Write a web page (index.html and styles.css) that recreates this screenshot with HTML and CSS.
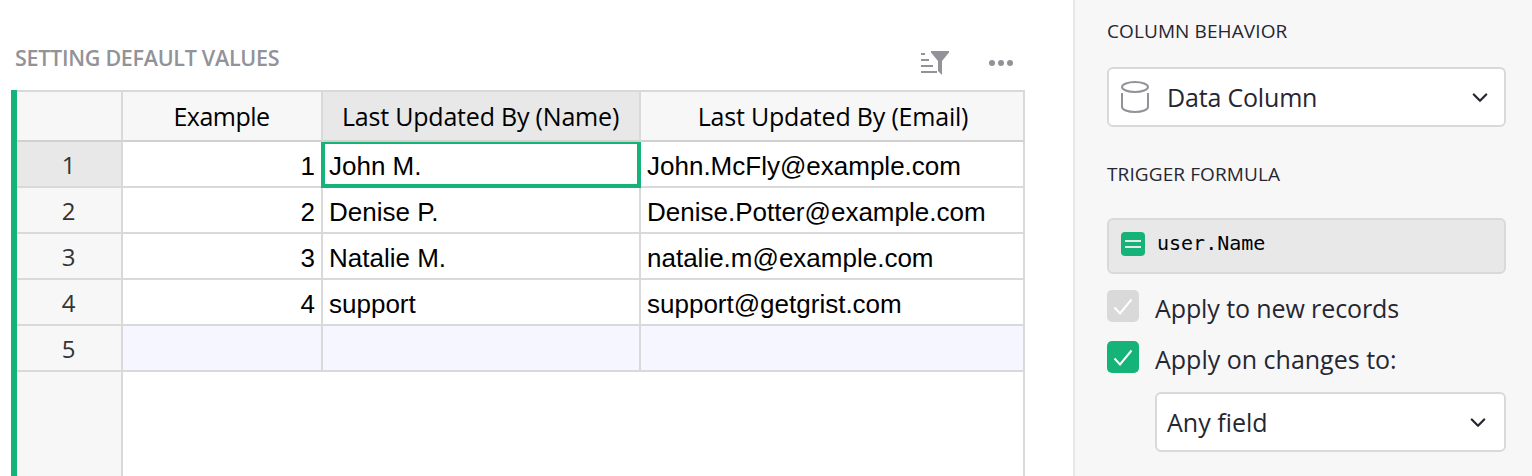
FILE: index.html
```html
<!DOCTYPE html>
<html lang="en">
<head>
<meta charset="utf-8">
<title>Setting Default Values</title>
<link rel="stylesheet" href="styles.css">
</head>
<body>
<div class="app">
  <main class="section">
    <header class="section-head">
      <h1 class="section-title">SETTING DEFAULT VALUES</h1>
      <div class="section-tools">
        <svg class="icon-filter" width="28" height="24" viewBox="0 0 28 24" fill="#929299"><path d="M0 2h4v2H0zM0 8h8v2H0zM0 14h12v2H0zM0 20h16v2H0zM10 0h18v1.500l-7 8.500v14l-4-4v-10l-7-8.500z"/></svg>
        <svg class="icon-dots" width="24" height="6" viewBox="0 0 24 6" fill="#929299"><circle cx="3" cy="3" r="3"/><circle cx="12" cy="3" r="3"/><circle cx="21" cy="3" r="3"/></svg>
      </div>
    </header>
    <div class="grid">
      <div class="row head">
        <div class="num"></div>
        <div class="cell"><span class="tight">Example</span></div>
        <div class="cell active"><span>Last Updated By (Name)</span></div>
        <div class="cell last"><span>Last Updated By (Email)</span></div>
      </div>
      <div class="row"><div class="num active">1</div><div class="cell right">1</div><div class="cell cursor">John M.</div><div class="cell">John.McFly@example.com</div></div>
      <div class="row"><div class="num">2</div><div class="cell right">2</div><div class="cell">Denise P.</div><div class="cell">Denise.Potter@example.com</div></div>
      <div class="row"><div class="num">3</div><div class="cell right">3</div><div class="cell">Natalie M.</div><div class="cell">natalie.m@example.com</div></div>
      <div class="row"><div class="num">4</div><div class="cell right">4</div><div class="cell">support</div><div class="cell">support@getgrist.com</div></div>
      <div class="row add"><div class="num">5</div><div class="cell"></div><div class="cell"></div><div class="cell"></div></div>
      <div class="rest"><div class="num"></div><div class="blank"></div></div>
    </div>
  </main>
  <aside class="panel">
    <h2 class="label">COLUMN BEHAVIOR</h2>
    <div class="select">
      <svg class="icon-data" width="28" height="32" viewBox="0 0 28 32" fill="none" stroke="#929299" stroke-width="2"><ellipse cx="14" cy="6" rx="13" ry="5"/><path d="M1 12v14c0 2.800 5.800 5 13 5s13-2.200 13-5V12"/></svg>
      <span class="select-text">Data Column</span>
      <svg class="chevron" width="16" height="10" viewBox="0 0 16 10" fill="none" stroke="#262633" stroke-width="2.200" stroke-linecap="round" stroke-linejoin="round"><path d="M1.800 1.500L8 7.800l6.200-6.300"/></svg>
    </div>
    <h2 class="label trigger">TRIGGER FORMULA</h2>
    <div class="formula">
      <svg width="24" height="24" viewBox="0 0 24 24"><rect width="24" height="24" rx="4" fill="#16b378"/><path d="M4 9h16M4 15h16" stroke="#e8e8e8" stroke-width="2"/></svg>
      <code class="code">user.Name</code>
    </div>
    <div class="check first">
      <svg class="box" width="32" height="32" viewBox="0 0 32 32"><rect width="32" height="32" rx="5" fill="#d9d9d9"/><path d="M7.500 17.500l5.500 6L24.500 9.500" fill="none" stroke="#fff" stroke-width="2"/></svg>
      <span class="check-text new">Apply to new records</span>
    </div>
    <div class="check">
      <svg class="box" width="32" height="32" viewBox="0 0 32 32"><rect width="32" height="32" rx="5" fill="#16b378"/><path d="M7.500 17.500l5.500 6L24.500 9.500" fill="none" stroke="#fff" stroke-width="2"/></svg>
      <span class="check-text">Apply on changes to:</span>
    </div>
    <div class="select field">
      <span class="select-text">Any field</span>
      <svg class="chevron" width="16" height="10" viewBox="0 0 16 10" fill="none" stroke="#262633" stroke-width="2.200" stroke-linecap="round" stroke-linejoin="round"><path d="M1.800 1.500L8 7.800l6.200-6.300"/></svg>
    </div>
  </aside>
</div>
</body>
</html>
```
FILE: styles.css
```css
* { box-sizing: border-box; }
body { margin: 0; overflow: hidden; background: #fff; }
.app { display: flex; width: 1532px; height: 476px; font-family: "Open Sans", "Noto Sans", sans-serif; color: #262633; }
svg { display: block; flex: none; }
span { white-space: nowrap; }

.section { display: flex; flex-direction: column; width: 1073px; padding-left: 11px; }
.section-head { display: flex; justify-content: space-between; height: 90px; padding: 43px 60px 0 4px; }
.section-title { margin: 0; font-size: 21.5px; line-height: 30px; font-weight: 600; letter-spacing: -0.29px; color: #929299; }
.section-tools { display: flex; align-items: center; gap: 40px; height: 40px; }

.grid { display: flex; flex-direction: column; flex: 1; width: 1014px; border-left: 6px solid #16b378; }
.row, .rest { display: grid; grid-template-columns: 106px 200px 318px 384px; grid-template-rows: 100%; }
.row { height: 46px; }
.row.head { height: 52px; border-top: 2px solid #d9d9d9; }
.num, .cell { border-right: 2px solid #d9d9d9; border-bottom: 2px solid #d9d9d9; }
.num { display: flex; justify-content: center; padding-right: 1px; background: #f7f7f7; font-size: 24px; line-height: 46px; color: #333; }
.cell { padding: 2px 6px 0; font-family: "Liberation Sans", Arial, sans-serif; font-size: 26px; line-height: 45px; color: #000; white-space: nowrap; }
.cell.right { text-align: right; }
.head .cell { display: flex; justify-content: center; padding: 0 1px 0 0; background: #f7f7f7; font-family: "Open Sans", "Noto Sans", sans-serif; font-size: 25px; line-height: 49px; letter-spacing: -0.2px; }
.head .cell.last { padding: 0 0 0 2px; }
.head .cell .tight { letter-spacing: -0.5px; }
.head .cell, .head .num { border-bottom-color: #d0d0d0; }
.head .cell.active, .num.active { background: #e8e8e8; }
.cell.cursor { margin-left: -2px; padding: 0 0 0 4px; border: 4px solid #16b378; border-top-width: 2px; line-height: 45px; }
.add .cell { background: #f5f6ff; }
.rest { flex: 1; }
.rest .num { border-bottom: 0; }
.blank { grid-column: 2 / 5; border-right: 2px solid #d9d9d9; }

.panel { width: 459px; padding: 17px 26px 0 32px; border-left: 2px solid #e8e8e8; background: #f7f7f7; }
.label { margin: 0; font-size: 19px; line-height: 28px; font-weight: 400; letter-spacing: 0.1px; }
.trigger { margin-top: 33px; }
.select { display: flex; align-items: center; height: 60px; margin-top: 22px; padding: 0 16px 0 12px; border: 2px solid #d9d9d9; border-radius: 6px; background: #fff; }
.select-text { flex: 1; font-size: 25px; line-height: 56px; letter-spacing: -0.18px; }
.icon-data { margin-right: 18px; }
.chevron { margin-top: 2px; }
.formula { display: flex; align-items: flex-start; height: 56px; margin-top: 30px; padding: 12px; border: 2px solid #d9d9d9; border-radius: 6px; background: #e8e8e8; }
.code { margin-left: 12px; font-family: "DejaVu Sans Mono", monospace; font-size: 20px; line-height: 22px; color: #000; }
.check { display: flex; height: 32px; margin-top: 19px; }
.check.first { margin-top: 16px; }
.check-text { margin-left: 16px; padding-top: 1px; font-size: 25px; line-height: 34px; }
.check-text.new { letter-spacing: -0.1px; }
.select.field { margin: 19px 0 0 48px; padding-left: 10px; padding-right: 18px; }
.field .select-text { letter-spacing: 0; }
```
